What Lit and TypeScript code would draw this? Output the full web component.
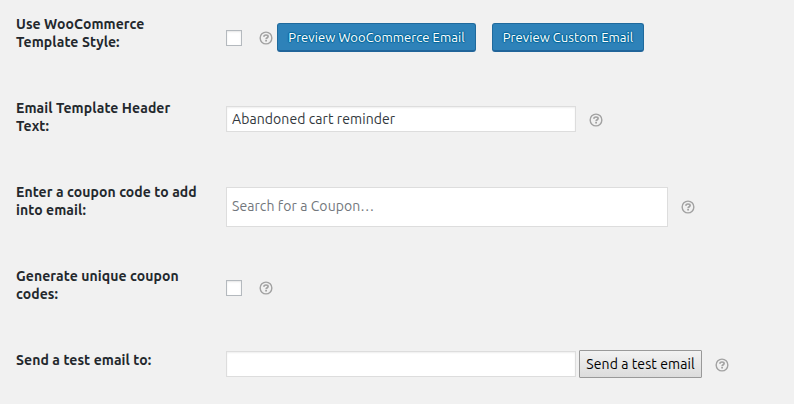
import { LitElement, html, css } from "lit";
import { customElement } from "lit/decorators.js";

@customElement("help-tip")
class HelpTip extends LitElement {
  static styles = css`
    :host { display: block; flex: none; width: 14px; height: 14px; }
    svg { display: block; }
  `;
  render() {
    return html`<svg width="14" height="14" viewBox="0 0 14 14" fill="none" stroke="#a2a2a2">
      <circle cx="7" cy="7" r="5.85" stroke-width="1.4" />
      <path d="M4.9 5.8C4.9 4.6 5.7 4 7 4S9.1 4.6 9.1 5.5C9.1 6.7 7.1 6.7 7.1 8.2" stroke-width="1.7" />
      <path d="M7.1 9V10.6" stroke-width="1.8" />
    </svg>`;
  }
}

@customElement("app-root")
class AppRoot extends LitElement {
  static styles = css`
    :host {
      display: block;
      box-sizing: border-box;
      height: 404px;
      overflow: hidden;
      background: #f1f1f1;
      color: #23282d;
      font: 14px/18px Ubuntu, "Noto Sans", sans-serif;
    }
    * { box-sizing: border-box; }
    .row { display: grid; grid-template-columns: 210px 1fr; height: 84px; padding: 15px 0 0 16px; }
    .label { font-weight: 600; letter-spacing: 0.08px; white-space: pre-line; }
    .field { display: flex; align-items: center; height: 28px; white-space: nowrap; }
    .style { margin-top: 8px; height: 29px; }
    .header { margin-top: 6px; }
    .header help-tip { margin-top: 2px; }
    .coupon { margin-top: 4px; height: 40px; }
    .unique { margin-top: 7px; }
    .test { margin-top: -1px; }
    .test help-tip { margin-top: 2px; }
    .check {
      flex: none;
      appearance: none; width: 16px; height: 16px; margin: 0 17px 0 0;
      border: 1px solid #b4b9be; background: #fff;
      box-shadow: inset 0 1px 2px rgba(0, 0, 0, 0.1);
    }
    .input {
      width: 350px; height: 26px; margin: 0; padding: 0 5px;
      border: 1px solid #ddd; border-radius: 0; outline: 0; background: #fff;
      box-shadow: inset 0 1px 2px rgba(0, 0, 0, 0.07);
      color: #32373c; font: inherit; letter-spacing: 0.08px;
    }
    .gap { margin-left: 13px; }
    .search {
      width: 442px; height: 40px; padding: 0 5px 2px; border: 1px solid #ddd; outline: 0;
      background: #fff; color: #72777c; font: inherit; letter-spacing: 0.08px;
    }
    .search::placeholder { color: #72777c; opacity: 1; }
    .primary {
      height: 29px; margin: 0 0 0 4px; padding: 0 0 1px; width: 199px;
      border: 1px solid #1f6a9d; border-bottom: 2px solid #21659a; border-radius: 3px;
      background: #2e82b9; color: #fff;
      font: 13px/24px Ubuntu, "Noto Sans", sans-serif; letter-spacing: 0.07px;
      text-shadow: 0 -1px 1px #006799, 1px 0 1px #006799, 0 1px 1px #006799, -1px 0 1px #006799;
    }
    .custom { width: 152px; margin-left: 16px; }
    .send {
      width: 123px; height: 28px; margin-left: 3px; padding: 0;
      border: 1px solid #999; border-radius: 1px;
      background: linear-gradient(#f2f2f2, #dcdcdc); color: #000;
      font: inherit; letter-spacing: 0.08px;
    }
  `;

  render() {
    return html`
      <div class="row">
        <div class="label">Use WooCommerce
Template Style:</div>
        <div class="field style">
          <input class="check" type="checkbox" />
          <help-tip></help-tip>
          <button class="primary">Preview WooCommerce Email</button>
          <button class="primary custom">Preview Custom Email</button>
        </div>
      </div>
      <div class="row">
        <div class="label">Email Template Header
Text:</div>
        <div class="field header">
          <input class="input" .value=${"Abandoned cart reminder"} />
          <help-tip class="gap"></help-tip>
        </div>
      </div>
      <div class="row">
        <div class="label">Enter a coupon code to add
into email:</div>
        <div class="field coupon">
          <input class="search" placeholder="Search for a Coupon…" />
          <help-tip class="gap"></help-tip>
        </div>
      </div>
      <div class="row">
        <div class="label">Generate unique coupon
codes:</div>
        <div class="field unique">
          <input class="check" type="checkbox" />
          <help-tip></help-tip>
        </div>
      </div>
      <div class="row">
        <div class="label">Send a test email to:</div>
        <div class="field test">
          <input class="input" />
          <button class="send">Send a test email</button>
          <help-tip class="gap"></help-tip>
        </div>
      </div>
    `;
  }
}
